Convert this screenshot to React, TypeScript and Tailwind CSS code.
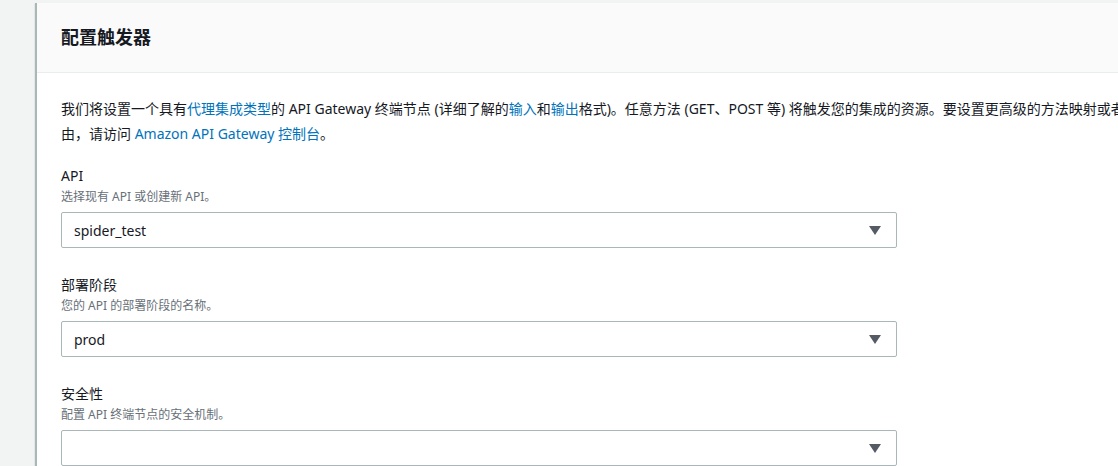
import React from 'react';

const font = { fontFamily: '"Noto Sans", "Noto Sans CJK SC", sans-serif' };

function Caret() {
  return (
    <svg width="12" height="9" viewBox="0 0 12 9" className="shrink-0">
      <path d="M0 0 H12 L6 9 Z" fill="#545b64" />
    </svg>
  );
}

function SelectField({ label, desc, value }: { label: string; desc: string; value: string }) {
  return (
    <div className="flex flex-col">
      <div className="text-[14px] leading-[20px] text-[#16191f]">{label}</div>
      <div className="text-[12px] leading-[22px] text-[#687078]">{desc}</div>
      <div className="mt-[4px] flex h-[36px] w-[836px] items-center justify-between rounded-[2px] border border-[#aab7b8] bg-white pl-[12px] pr-[15px]">
        <span className="text-[14px] text-[#16191f]">{value}</span>
        <Caret />
      </div>
    </div>
  );
}

export default function App() {
  return (
    <div style={font} className="h-[466px] w-[1118px] overflow-hidden bg-[#f2f3f3] pt-[3px] pl-[35px]">
      <div className="w-[1200px] border-l-2 border-[#aab7b8] bg-white shadow-[0_1px_1px_0_rgba(0,28,36,0.3)]">
        <div className="flex h-[70px] items-center border-b border-[#eaeded] bg-[#fafafa] px-[24px]">
          <h2 className="text-[18px] font-bold text-[#16191f]">配置触发器</h2>
        </div>
        <div className="flex flex-col gap-[20px] px-[24px] pt-[23px] pb-[40px]">
          <p className="text-[14px] leading-[25px] text-[#16191f]">
            我们将设置一个具有<span className="text-[#0073bb]">代理集成类型</span>的 API Gateway 终端节点 (详细了解的
            <span className="text-[#0073bb]">输入</span>和<span className="text-[#0073bb]">输出</span>
            格式)。任意方法 (GET、POST 等) 将触发您的集成的资源。要设置更高级的方法映射或者子路径路
            <br />
            由，请访问 <span className="text-[#0073bb]">Amazon API Gateway 控制台</span>。
          </p>
          <div className="flex flex-col gap-[27px]">
            <SelectField label="API" desc="选择现有 API 或创建新 API。" value="spider_test" />
            <SelectField label="部署阶段" desc="您的 API 的部署阶段的名称。" value="prod" />
            <SelectField label="安全性" desc="配置 API 终端节点的安全机制。" value="" />
          </div>
        </div>
      </div>
    </div>
  );
}
